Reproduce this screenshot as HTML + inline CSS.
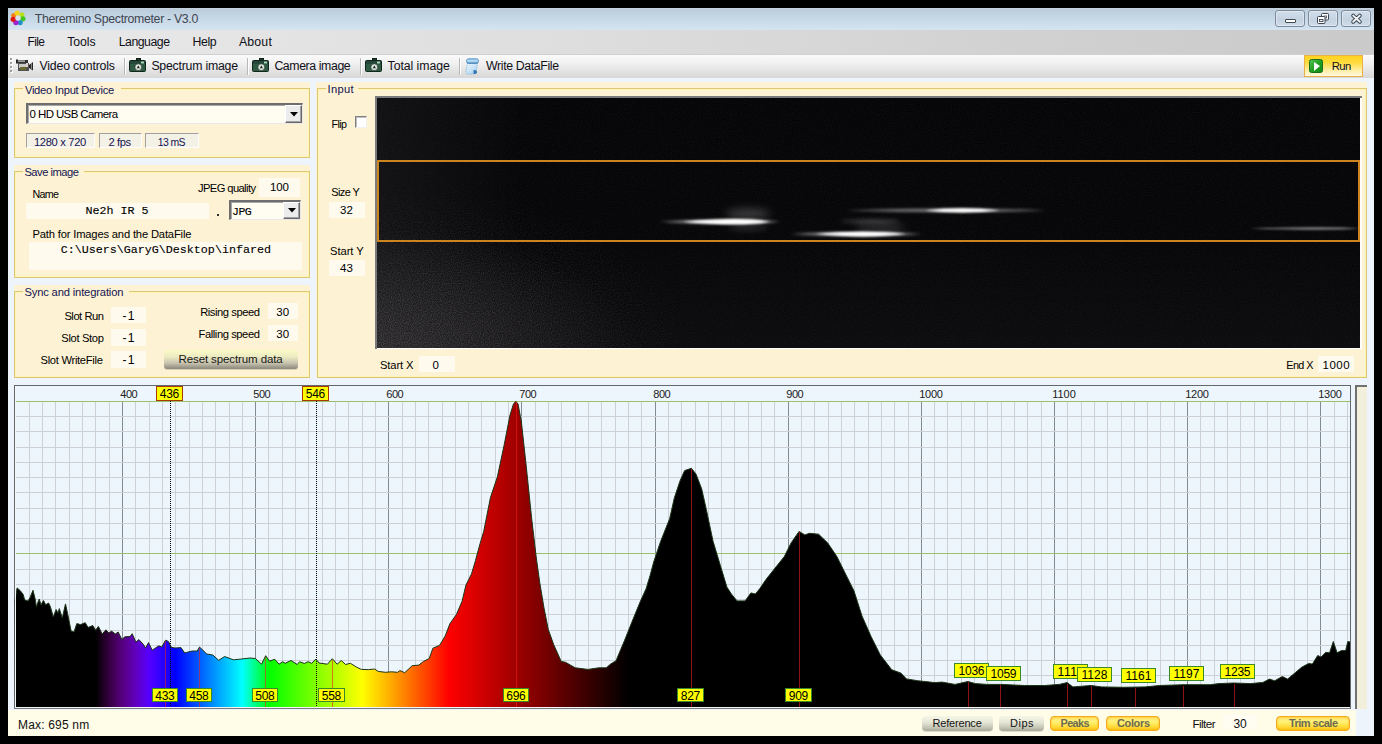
<!DOCTYPE html>
<html><head><meta charset="utf-8"><style>
html,body{margin:0;padding:0;}
body{width:1382px;height:744px;background:#000;position:relative;overflow:hidden;font-family:"Liberation Sans",sans-serif;}
.t{position:absolute;white-space:nowrap;}
div{box-sizing:border-box;}
</style></head><body>
<div style="position:absolute;left:8px;top:8px;width:1366px;height:728px;background:#edf4fb;"></div>
<div style="position:absolute;left:8px;top:8px;width:1366px;height:22px;background:linear-gradient(#c6d3df 0px,#bccddc 2px,#c7d8e7 11px,#d5e4f1 22px);"></div>
<svg style="position:absolute;left:10px;top:10px" width="16" height="16" viewBox="10 10 16 16"><circle cx="13.67" cy="15.50" r="2.6" fill="#f08020"/><circle cx="17.13" cy="13.08" r="2.6" fill="#f8d020"/><circle cx="21.83" cy="14.79" r="2.6" fill="#b8e020"/><circle cx="22.92" cy="18.87" r="2.6" fill="#40c820"/><circle cx="20.11" cy="22.53" r="2.6" fill="#2090c8"/><circle cx="15.89" cy="22.53" r="2.6" fill="#a020d0"/><circle cx="13.17" cy="19.29" r="2.6" fill="#e01818"/><circle cx="18" cy="18" r="2.6" fill="#d8e2ec"/></svg>
<div class="t" style="left:34.80px;top:13px;font:normal 12.30px/12px 'Liberation Sans', sans-serif;letter-spacing:-0.313px;color:#3f4650;">Theremino Spectrometer - V3.0</div>
<div style="position:absolute;left:1275px;top:10px;width:30px;height:17px;border:1px solid #7d8b9b;border-radius:3px;background:linear-gradient(#d2deea,#c6d4e2 50%,#c2d0df 51%,#cfdcea);box-shadow:inset 0 0 0 1px rgba(255,255,255,0.35);"></div>
<div style="position:absolute;left:1308px;top:10px;width:30px;height:17px;border:1px solid #7d8b9b;border-radius:3px;background:linear-gradient(#d2deea,#c6d4e2 50%,#c2d0df 51%,#cfdcea);box-shadow:inset 0 0 0 1px rgba(255,255,255,0.35);"></div>
<div style="position:absolute;left:1341px;top:10px;width:30px;height:17px;border:1px solid #7d8b9b;border-radius:3px;background:linear-gradient(#d2deea,#c6d4e2 50%,#c2d0df 51%,#cfdcea);box-shadow:inset 0 0 0 1px rgba(255,255,255,0.35);"></div>
<div style="position:absolute;left:1285px;top:19px;width:11px;height:4px;background:#fff;border:1px solid #404850;border-radius:1px;"></div>
<svg style="position:absolute;left:1315px;top:12px" width="16" height="14" viewBox="0 0 16 14"><rect x="6.5" y="1.5" width="7" height="6.5" rx="1" fill="#fff" stroke="#3a4450"/><rect x="9" y="4" width="2.5" height="2" fill="none" stroke="#3a4450" stroke-width="0.8"/><rect x="2.5" y="4.5" width="7.5" height="7" rx="1" fill="#fff" stroke="#3a4450"/><rect x="4.5" y="7.5" width="3.5" height="2" fill="none" stroke="#3a4450" stroke-width="0.9"/></svg>
<svg style="position:absolute;left:1349px;top:12px" width="16" height="13" viewBox="0 0 16 13"><path d="M4.2 3.6 L10.8 9.8 M10.8 3.6 L4.2 9.8" stroke="#3a4450" stroke-width="3.9" stroke-linecap="round"/><path d="M4.2 3.6 L10.8 9.8 M10.8 3.6 L4.2 9.8" stroke="#f4f6f8" stroke-width="1.9" stroke-linecap="round"/></svg>
<div style="position:absolute;left:8px;top:30px;width:1366px;height:25px;background:linear-gradient(90deg,#e9e9e9 0%,#dedede 40%,#cfcfcf 80%,#cacaca 100%);border-bottom:1px solid #d0d0d0;"></div>
<div class="t" style="left:27.50px;top:36px;font:normal 11.92px/12px 'Liberation Sans', sans-serif;letter-spacing:-0.600px;color:#101018;">File</div>
<div class="t" style="left:67.30px;top:36px;font:normal 12.30px/12px 'Liberation Sans', sans-serif;letter-spacing:-0.102px;color:#101018;">Tools</div>
<div class="t" style="left:118.70px;top:36px;font:normal 12.30px/12px 'Liberation Sans', sans-serif;letter-spacing:-0.489px;color:#101018;">Language</div>
<div class="t" style="left:192.60px;top:36px;font:normal 12.30px/12px 'Liberation Sans', sans-serif;letter-spacing:-0.467px;color:#101018;">Help</div>
<div class="t" style="left:239.00px;top:36px;font:normal 12.30px/12px 'Liberation Sans', sans-serif;letter-spacing:0.165px;color:#101018;">About</div>
<div style="position:absolute;left:8px;top:55px;width:1366px;height:23px;background:linear-gradient(#fafafa 0px,#f1f1f1 8px,#e3e3e3 16px,#d7d7d7 23px);"></div>
<div style="position:absolute;left:10px;top:58px;width:2px;height:2px;background:#a0a0a0;box-shadow:1px 1px 0 #fff;"></div>
<div style="position:absolute;left:10px;top:62px;width:2px;height:2px;background:#a0a0a0;box-shadow:1px 1px 0 #fff;"></div>
<div style="position:absolute;left:10px;top:66px;width:2px;height:2px;background:#a0a0a0;box-shadow:1px 1px 0 #fff;"></div>
<div style="position:absolute;left:10px;top:70px;width:2px;height:2px;background:#a0a0a0;box-shadow:1px 1px 0 #fff;"></div>
<div style="position:absolute;left:124px;top:58px;width:1px;height:17px;background:#b8b8b8;box-shadow:1px 0 0 #fff;"></div>
<div style="position:absolute;left:247px;top:58px;width:1px;height:17px;background:#b8b8b8;box-shadow:1px 0 0 #fff;"></div>
<div style="position:absolute;left:360px;top:58px;width:1px;height:17px;background:#b8b8b8;box-shadow:1px 0 0 #fff;"></div>
<div style="position:absolute;left:459px;top:58px;width:1px;height:17px;background:#b8b8b8;box-shadow:1px 0 0 #fff;"></div>
<svg style="position:absolute;left:16px;top:59px" width="18" height="13" viewBox="0 0 18 13"><rect x="0" y="0.5" width="2" height="4" fill="#202020"/><rect x="1" y="1" width="11" height="3" fill="#303030"/><rect x="2" y="1.5" width="7" height="1.2" fill="#d0d0d0"/><rect x="2" y="4" width="11" height="8" fill="#505050"/><rect x="3" y="5" width="7" height="4" fill="#c8c8c8"/><rect x="4" y="8" width="6" height="3" fill="#6a6a30"/><rect x="10" y="4" width="2" height="4" fill="#e8d0d0"/><path d="M13 6 L17 3 L17 11.5 L13 9 Z" fill="#282828"/><rect x="15" y="4" width="1" height="6" fill="#888"/></svg>
<svg style="position:absolute;left:129px;top:58px" width="17" height="14" viewBox="0 0 17 14"><rect x="7.5" y="0.5" width="4" height="3" fill="#1e3a28" stroke="#0e2016"/><rect x="0.5" y="2.5" width="16" height="11" rx="1" fill="#2f5a44" stroke="#10261a"/><rect x="1" y="3" width="15" height="3" fill="#24473a"/><rect x="12" y="3.5" width="3" height="2" fill="#a8d8b8"/><circle cx="9.3" cy="9.2" r="3.4" fill="#dce4dc" stroke="#1a2a20" stroke-width="0.6"/><path d="M9.3 7.6 L10.8 10.3 L7.8 10.3Z" fill="#102018"/></svg>
<svg style="position:absolute;left:252px;top:58px" width="17" height="14" viewBox="0 0 17 14"><rect x="7.5" y="0.5" width="4" height="3" fill="#1e3a28" stroke="#0e2016"/><rect x="0.5" y="2.5" width="16" height="11" rx="1" fill="#2f5a44" stroke="#10261a"/><rect x="1" y="3" width="15" height="3" fill="#24473a"/><rect x="12" y="3.5" width="3" height="2" fill="#a8d8b8"/><circle cx="9.3" cy="9.2" r="3.4" fill="#dce4dc" stroke="#1a2a20" stroke-width="0.6"/><path d="M9.3 7.6 L10.8 10.3 L7.8 10.3Z" fill="#102018"/></svg>
<svg style="position:absolute;left:365px;top:58px" width="17" height="14" viewBox="0 0 17 14"><rect x="7.5" y="0.5" width="4" height="3" fill="#1e3a28" stroke="#0e2016"/><rect x="0.5" y="2.5" width="16" height="11" rx="1" fill="#2f5a44" stroke="#10261a"/><rect x="1" y="3" width="15" height="3" fill="#24473a"/><rect x="12" y="3.5" width="3" height="2" fill="#a8d8b8"/><circle cx="9.3" cy="9.2" r="3.4" fill="#dce4dc" stroke="#1a2a20" stroke-width="0.6"/><path d="M9.3 7.6 L10.8 10.3 L7.8 10.3Z" fill="#102018"/></svg>
<svg style="position:absolute;left:465px;top:58px" width="15" height="17" viewBox="0 0 15 17"><defs><linearGradient id="sg" x1="0" y1="0" x2="1" y2="1"><stop offset="0" stop-color="#eef8fe"/><stop offset="1" stop-color="#a6cfee"/></linearGradient><linearGradient id="sr" x1="0" y1="0" x2="0" y2="1"><stop offset="0" stop-color="#8cc8f0"/><stop offset="0.5" stop-color="#bfe4fa"/><stop offset="1" stop-color="#3f86c0"/></linearGradient></defs><path d="M2.5 5 L12.5 5 L11 15 Q10 16 8 16 L1.5 16 L0.8 14 Z" fill="url(#sg)" stroke="#7fb0d6" stroke-width="0.8" stroke-dasharray="1.2 0.8"/><rect x="1.5" y="0.8" width="12" height="4.6" rx="2.2" fill="url(#sr)" stroke="#4a82b4" stroke-width="0.8"/><path d="M8.5 12 Q12.5 11.5 12 14.5 Q11.5 16.5 8.5 16 Z" fill="#3a78b4"/></svg>
<div class="t" style="left:39.40px;top:60px;font:normal 12.30px/12px 'Liberation Sans', sans-serif;letter-spacing:-0.163px;color:#101018;">Video controls</div>
<div class="t" style="left:151.40px;top:60px;font:normal 12.30px/12px 'Liberation Sans', sans-serif;letter-spacing:-0.227px;color:#101018;">Spectrum image</div>
<div class="t" style="left:274.40px;top:60px;font:normal 12.30px/12px 'Liberation Sans', sans-serif;letter-spacing:-0.397px;color:#101018;">Camera image</div>
<div class="t" style="left:387.60px;top:60px;font:normal 12.30px/12px 'Liberation Sans', sans-serif;letter-spacing:-0.070px;color:#101018;">Total image</div>
<div class="t" style="left:486.00px;top:60px;font:normal 12.30px/12px 'Liberation Sans', sans-serif;letter-spacing:-0.361px;color:#101018;">Write DataFile</div>
<div style="position:absolute;left:1304px;top:55px;width:59px;height:22px;border:1px solid #e8b048;background:linear-gradient(#ffd21e 0%,#ffdc40 35%,#ffeea0 70%,#fff8e0 100%);"></div>
<svg style="position:absolute;left:1309px;top:59px" width="14" height="14" viewBox="0 0 14 14"><defs><linearGradient id="rg" x1="0" y1="0" x2="1" y2="1"><stop offset="0" stop-color="#58c458"/><stop offset="0.5" stop-color="#22a022"/><stop offset="1" stop-color="#128a12"/></linearGradient></defs><rect x="0.5" y="0.5" width="13" height="13" rx="2" fill="url(#rg)" stroke="#1a701a"/><path d="M5 3 L11 7 L5 12 Z" fill="#fff"/></svg>
<div class="t" style="left:1331.80px;top:61px;font:normal 11.29px/11px 'Liberation Sans', sans-serif;letter-spacing:-0.600px;color:#101018;">Run</div>
<div style="position:absolute;left:14px;top:82px;width:296px;height:76px;background:#fdf2d3;"></div>
<div style="position:absolute;left:14px;top:88px;width:296px;height:70px;border:1px solid #dfc577;"></div>
<div style="position:absolute;left:15px;top:89px;width:294px;height:68px;border:1px solid #fff7b0;"></div>
<div style="position:absolute;left:23px;top:88px;width:98px;height:2px;background:#fdf2d3;"></div>
<div class="t" style="left:24.90px;top:85px;font:normal 11.20px/11px 'Liberation Sans', sans-serif;letter-spacing:-0.259px;color:#141452;">Video Input Device</div>
<div style="position:absolute;left:26px;top:103px;width:277px;height:21px;background:#fffcf2;border-top:2px solid #6e6e6e;border-left:2px solid #6e6e6e;border-right:1px solid #e8e8e8;border-bottom:1px solid #e8e8e8;box-shadow:inset 1px 1px 0 #a8a8a8;"></div>
<div style="position:absolute;left:285px;top:105px;width:17px;height:18px;background:#ececec;border-top:1px solid #fff;border-left:1px solid #fff;border-right:1px solid #6a6a6a;border-bottom:1px solid #6a6a6a;box-shadow:inset -1px -1px 0 #a0a0a0;"></div>
<svg style="position:absolute;left:289.5px;top:111.5px" width="8" height="5" viewBox="0 0 8 5"><path d="M0 0 H8 L4 4.5Z" fill="#000"/></svg>
<div class="t" style="left:29.60px;top:109px;font:normal 11.48px/11px 'Liberation Sans', sans-serif;letter-spacing:-0.600px;color:#000;">0 HD USB Camera</div>
<div style="position:absolute;left:26px;top:133px;width:69px;height:15px;background:#f4f1e6;border-top:1px solid #a0a0a0;border-left:1px solid #a0a0a0;border-right:1px solid #fff;border-bottom:1px solid #fff;"></div>
<div class="t" style="left:34.00px;top:137px;font:normal 11.20px/11px 'Liberation Sans', sans-serif;letter-spacing:-0.348px;color:#141452;">1280 x 720</div>
<div style="position:absolute;left:99px;top:133px;width:43px;height:15px;background:#f4f1e6;border-top:1px solid #a0a0a0;border-left:1px solid #a0a0a0;border-right:1px solid #fff;border-bottom:1px solid #fff;"></div>
<div class="t" style="left:108.40px;top:137px;font:normal 11.20px/11px 'Liberation Sans', sans-serif;letter-spacing:-0.370px;color:#141452;">2 fps</div>
<div style="position:absolute;left:145px;top:133px;width:54px;height:15px;background:#f4f1e6;border-top:1px solid #a0a0a0;border-left:1px solid #a0a0a0;border-right:1px solid #fff;border-bottom:1px solid #fff;"></div>
<div class="t" style="left:157.70px;top:138px;font:normal 10.45px/10px 'Liberation Sans', sans-serif;letter-spacing:-0.600px;color:#141452;">13 mS</div>
<div style="position:absolute;left:14px;top:165px;width:296px;height:113px;background:#fdf2d3;"></div>
<div style="position:absolute;left:14px;top:171px;width:296px;height:107px;border:1px solid #dfc577;"></div>
<div style="position:absolute;left:15px;top:172px;width:294px;height:105px;border:1px solid #fff7b0;"></div>
<div style="position:absolute;left:23px;top:171px;width:61px;height:2px;background:#fdf2d3;"></div>
<div class="t" style="left:24.40px;top:167px;font:normal 11.20px/11px 'Liberation Sans', sans-serif;letter-spacing:-0.494px;color:#141452;">Save image</div>
<div class="t" style="left:198.00px;top:183px;font:normal 11.18px/11px 'Liberation Sans', sans-serif;letter-spacing:-0.600px;color:#000;">JPEG quality</div>
<div style="position:absolute;left:259px;top:178px;width:41px;height:19px;background:#fefaee;"></div>
<div class="t" style="left:270.00px;top:181px;font:normal 11.50px/12px 'Liberation Sans', sans-serif;letter-spacing:-0.091px;color:#000;">100</div>
<div class="t" style="left:32.40px;top:189px;font:normal 10.68px/11px 'Liberation Sans', sans-serif;letter-spacing:-0.600px;color:#000;">Name</div>
<div style="position:absolute;left:26px;top:203px;width:183px;height:16px;background:#fefaee;"></div>
<div class="t" style="left:85.60px;top:205px;font:normal 11.70px/12px 'Liberation Mono', monospace;letter-spacing:-0.024px;color:#000;-webkit-text-stroke:0.12px #000;">Ne2h IR 5</div>
<div style="position:absolute;left:217px;top:214px;width:2px;height:2px;background:#303030;"></div>
<div style="position:absolute;left:229px;top:200px;width:72px;height:20px;background:#fffcf2;border-top:2px solid #6e6e6e;border-left:2px solid #6e6e6e;border-right:1px solid #e8e8e8;border-bottom:1px solid #e8e8e8;box-shadow:inset 1px 1px 0 #a8a8a8;"></div>
<div style="position:absolute;left:283px;top:202px;width:17px;height:17px;background:#ececec;border-top:1px solid #fff;border-left:1px solid #fff;border-right:1px solid #6a6a6a;border-bottom:1px solid #6a6a6a;box-shadow:inset -1px -1px 0 #a0a0a0;"></div>
<svg style="position:absolute;left:287.5px;top:208.0px" width="8" height="5" viewBox="0 0 8 5"><path d="M0 0 H8 L4 4.5Z" fill="#000"/></svg>
<div class="t" style="left:232.10px;top:206px;font:normal 11.56px/12px 'Liberation Mono', monospace;letter-spacing:-0.600px;color:#000;-webkit-text-stroke:0.12px #000;">JPG</div>
<div class="t" style="left:32.40px;top:229px;font:normal 11.20px/11px 'Liberation Sans', sans-serif;letter-spacing:-0.166px;color:#000;">Path for Images and the DataFile</div>
<div style="position:absolute;left:29px;top:242px;width:273px;height:28px;background:#fefaee;"></div>
<div class="t" style="left:60.70px;top:244px;font:normal 11.70px/12px 'Liberation Mono', monospace;letter-spacing:-0.005px;color:#000;-webkit-text-stroke:0.12px #000;">C:\Users\GaryG\Desktop\infared</div>
<div style="position:absolute;left:14px;top:285px;width:296px;height:93px;background:#fdf2d3;"></div>
<div style="position:absolute;left:14px;top:291px;width:296px;height:87px;border:1px solid #dfc577;"></div>
<div style="position:absolute;left:15px;top:292px;width:294px;height:85px;border:1px solid #fff7b0;"></div>
<div style="position:absolute;left:23px;top:291px;width:106px;height:2px;background:#fdf2d3;"></div>
<div class="t" style="left:24.40px;top:287px;font:normal 11.20px/11px 'Liberation Sans', sans-serif;letter-spacing:-0.153px;color:#141452;">Sync and integration</div>
<div class="t" style="left:64.40px;top:311px;font:normal 11.20px/11px 'Liberation Sans', sans-serif;letter-spacing:-0.479px;color:#000;">Slot Run</div>
<div style="position:absolute;left:111px;top:307px;width:35px;height:16px;background:#fefaee;"></div>
<div class="t" style="left:122.50px;top:310px;font:normal 12.19px/12px 'Liberation Sans', sans-serif;letter-spacing:1.163px;color:#000;">-1</div>
<div class="t" style="left:61.30px;top:333px;font:normal 11.20px/11px 'Liberation Sans', sans-serif;letter-spacing:-0.344px;color:#000;">Slot Stop</div>
<div style="position:absolute;left:111px;top:329px;width:35px;height:17px;background:#fefaee;"></div>
<div class="t" style="left:122.50px;top:332px;font:normal 12.19px/12px 'Liberation Sans', sans-serif;letter-spacing:1.163px;color:#000;">-1</div>
<div class="t" style="left:40.50px;top:355px;font:normal 11.20px/11px 'Liberation Sans', sans-serif;letter-spacing:-0.299px;color:#000;">Slot WriteFile</div>
<div style="position:absolute;left:111px;top:351px;width:35px;height:17px;background:#fefaee;"></div>
<div class="t" style="left:122.50px;top:354px;font:normal 12.19px/12px 'Liberation Sans', sans-serif;letter-spacing:1.163px;color:#000;">-1</div>
<div class="t" style="left:200.20px;top:307px;font:normal 11.20px/11px 'Liberation Sans', sans-serif;letter-spacing:-0.450px;color:#000;">Rising speed</div>
<div style="position:absolute;left:268px;top:303px;width:30px;height:16px;background:#fefaee;"></div>
<div class="t" style="left:276.20px;top:306px;font:normal 11.50px/12px 'Liberation Sans', sans-serif;letter-spacing:0.212px;color:#000;">30</div>
<div class="t" style="left:198.50px;top:329px;font:normal 11.20px/11px 'Liberation Sans', sans-serif;letter-spacing:-0.426px;color:#000;">Falling speed</div>
<div style="position:absolute;left:268px;top:325px;width:30px;height:16px;background:#fefaee;"></div>
<div class="t" style="left:276.20px;top:328px;font:normal 11.50px/12px 'Liberation Sans', sans-serif;letter-spacing:0.212px;color:#000;">30</div>
<div style="position:absolute;left:164px;top:350px;width:134px;height:19px;border-radius:3px;background:linear-gradient(#fafac6 0%,#ecebc2 35%,#c6c2ae 70%,#8a867a 100%);box-shadow:0 1px 0 #d8d0b0;"></div>
<div class="t" style="left:178.50px;top:353px;font:normal 11.50px/12px 'Liberation Sans', sans-serif;letter-spacing:-0.106px;color:#181818;">Reset spectrum data</div>
<div style="position:absolute;left:316px;top:82px;width:1051px;height:296px;background:#fdf2d3;"></div>
<div style="position:absolute;left:317px;top:88px;width:1050px;height:290px;border:1px solid #dfc577;"></div>
<div style="position:absolute;left:318px;top:89px;width:1048px;height:288px;border:1px solid #fff7b0;"></div>
<div style="position:absolute;left:326px;top:88px;width:32px;height:2px;background:#fdf2d3;"></div>
<div class="t" style="left:327.50px;top:84px;font:normal 11.20px/11px 'Liberation Sans', sans-serif;letter-spacing:0.323px;color:#141452;">Input</div>
<div class="t" style="left:331.50px;top:119px;font:normal 10.74px/11px 'Liberation Sans', sans-serif;letter-spacing:-0.600px;color:#000;">Flip</div>
<div style="position:absolute;left:355px;top:116px;width:12px;height:12px;background:#fff;border-top:1px solid #808080;border-left:1px solid #808080;border-right:1px solid #f0f0f0;border-bottom:1px solid #f0f0f0;box-shadow:inset 1px 1px 0 #c0c0c0;"></div>
<div class="t" style="left:331.30px;top:187px;font:normal 10.93px/11px 'Liberation Sans', sans-serif;letter-spacing:-0.600px;color:#000;">Size Y</div>
<div style="position:absolute;left:329px;top:202px;width:36px;height:16px;background:#fefaee;"></div>
<div class="t" style="left:340.00px;top:204px;font:normal 11.50px/12px 'Liberation Sans', sans-serif;letter-spacing:0.212px;color:#000;">32</div>
<div class="t" style="left:330.00px;top:246px;font:normal 11.20px/11px 'Liberation Sans', sans-serif;letter-spacing:-0.039px;color:#000;">Start Y</div>
<div style="position:absolute;left:329px;top:260px;width:36px;height:16px;background:#fefaee;"></div>
<div class="t" style="left:340.00px;top:262px;font:normal 11.50px/12px 'Liberation Sans', sans-serif;letter-spacing:0.212px;color:#000;">43</div>
<div class="t" style="left:380.00px;top:360px;font:normal 11.20px/11px 'Liberation Sans', sans-serif;letter-spacing:-0.106px;color:#000;">Start X</div>
<div style="position:absolute;left:419px;top:356px;width:36px;height:16px;background:#fefaee;"></div>
<div class="t" style="left:432.50px;top:359px;font:normal 11.51px/12px 'Liberation Sans', sans-serif;letter-spacing:0.600px;color:#000;">0</div>
<div class="t" style="left:1286.30px;top:360px;font:normal 10.83px/11px 'Liberation Sans', sans-serif;letter-spacing:-0.600px;color:#000;">End X</div>
<div style="position:absolute;left:1318px;top:356px;width:36px;height:16px;background:#fefaee;"></div>
<div class="t" style="left:1322.50px;top:359px;font:normal 11.50px/12px 'Liberation Sans', sans-serif;letter-spacing:0.504px;color:#000;">1000</div>
<div style="position:absolute;left:375px;top:96px;width:987px;height:253px;background:#fff;border-top:2px solid #7a7a7a;border-left:2px solid #7a7a7a;"></div>
<svg style="position:absolute;left:377px;top:98px" width="983" height="250" viewBox="0 0 983 250"><defs><filter id="nz" x="0" y="0" width="100%" height="100%"><feTurbulence type="fractalNoise" baseFrequency="0.9" numOctaves="1" seed="3"/><feColorMatrix type="matrix" values="0 0 0 0 0.15  0 0 0 0 0.15  0 0 0 0 0.15  0 0 0 2.2 -0.85"/></filter><filter id="b1" x="-50%" y="-300%" width="200%" height="700%"><feGaussianBlur stdDeviation="14 1.6"/></filter><filter id="b2" x="-50%" y="-300%" width="200%" height="700%"><feGaussianBlur stdDeviation="8 1"/></filter><filter id="b3" x="-50%" y="-300%" width="200%" height="700%"><feGaussianBlur stdDeviation="10 4"/></filter><linearGradient id="vg" x1="0" y1="0" x2="0" y2="1"><stop offset="0" stop-color="#050407"/><stop offset="0.55" stop-color="#060508"/><stop offset="1" stop-color="#0c0b0e"/></linearGradient><linearGradient id="hg" x1="0" y1="0" x2="1" y2="0"><stop offset="0" stop-color="#fff" stop-opacity="0.05"/><stop offset="0.15" stop-color="#fff" stop-opacity="0"/></linearGradient><radialGradient id="bl" gradientUnits="userSpaceOnUse" cx="0" cy="250" r="260" gradientTransform="translate(0 250) scale(1 0.45) translate(0 -250)"><stop offset="0" stop-color="#2a282a" stop-opacity="0.9"/><stop offset="1" stop-color="#2a282a" stop-opacity="0"/></radialGradient><mask id="nm" maskUnits="userSpaceOnUse" x="0" y="0" width="983" height="250"><rect width="983" height="250" fill="url(#mg)"/></mask><radialGradient id="mg" gradientUnits="userSpaceOnUse" cx="0" cy="250" r="330" gradientTransform="translate(0 250) scale(1 0.5) translate(0 -250)"><stop offset="0" stop-color="#fff"/><stop offset="1" stop-color="#000"/></radialGradient></defs><rect width="983" height="250" fill="url(#vg)"/><rect width="983" height="250" fill="url(#hg)"/><rect width="983" height="250" fill="url(#bl)"/><rect width="983" height="250" filter="url(#nz)" opacity="0.1"/><rect width="983" height="250" filter="url(#nz)" opacity="0.5" mask="url(#nm)"/><ellipse cx="371" cy="116" rx="22" ry="5" fill="#fff" opacity="0.22" style="filter:blur(4px)"/><ellipse cx="371" cy="129" rx="20" ry="3" fill="#fff" opacity="0.15" style="filter:blur(3px)"/><path d="M283 123.69999999999999 Q358 119.19999999999999 403 123.69999999999999 Q358 128.2 283 123.69999999999999Z" fill="#fff" opacity="0.55" style="filter:blur(1.6px)"/><path d="M306 123.69999999999999 Q365 118.49999999999999 393 123.69999999999999 Q365 128.89999999999998 306 123.69999999999999Z" fill="#fff" opacity="1.0" style="filter:blur(0.9px)"/><path d="M468 112.4 Q573 108.80000000000001 669 112.4 Q573 116.0 468 112.4Z" fill="#fff" opacity="0.45" style="filter:blur(1.6px)"/><path d="M548 112.4 Q585 108.2 623 112.4 Q585 116.60000000000001 548 112.4Z" fill="#fff" opacity="1.0" style="filter:blur(0.9px)"/><ellipse cx="493" cy="123.30000000000001" rx="30" ry="1.5" fill="#fff" opacity="0.25" style="filter:blur(2px)"/><ellipse cx="503" cy="130" rx="25" ry="5" fill="#fff" opacity="0.15" style="filter:blur(4px)"/><path d="M413 136.1 Q485 131.9 545 136.1 Q485 140.29999999999998 413 136.1Z" fill="#fff" opacity="0.55" style="filter:blur(1.6px)"/><path d="M438 136.1 Q489 131.5 529 136.1 Q489 140.7 438 136.1Z" fill="#fff" opacity="1.0" style="filter:blur(0.9px)"/><path d="M873 130.5 Q953 128.1 983 130.5 Q953 132.9 873 130.5Z" fill="#fff" opacity="0.5" style="filter:blur(1.2px)"/></svg>
<div style="position:absolute;left:377px;top:160px;width:983px;height:82px;border:2px solid #cc8420;"></div>
<svg style="position:absolute;left:0;top:0" width="1382" height="744" viewBox="0 0 1382 744" shape-rendering="crispEdges"><defs><linearGradient id="spec" gradientUnits="userSpaceOnUse" x1="15" y1="0" x2="1350" y2="0"><stop offset="0.05061" stop-color="rgb(0,0,0)"/><stop offset="0.05559" stop-color="rgb(0,0,0)"/><stop offset="0.06058" stop-color="rgb(0,0,0)"/><stop offset="0.06556" stop-color="rgb(29,0,32)"/><stop offset="0.07055" stop-color="rgb(53,0,64)"/><stop offset="0.07554" stop-color="rgb(72,0,96)"/><stop offset="0.08052" stop-color="rgb(85,0,128)"/><stop offset="0.08551" stop-color="rgb(93,0,159)"/><stop offset="0.09050" stop-color="rgb(96,0,191)"/><stop offset="0.09548" stop-color="rgb(93,0,223)"/><stop offset="0.10047" stop-color="rgb(85,0,255)"/><stop offset="0.10546" stop-color="rgb(64,0,255)"/><stop offset="0.11044" stop-color="rgb(42,0,255)"/><stop offset="0.11543" stop-color="rgb(21,0,255)"/><stop offset="0.12042" stop-color="rgb(0,0,255)"/><stop offset="0.12540" stop-color="rgb(0,26,255)"/><stop offset="0.13039" stop-color="rgb(0,51,255)"/><stop offset="0.13538" stop-color="rgb(0,76,255)"/><stop offset="0.14036" stop-color="rgb(0,102,255)"/><stop offset="0.14535" stop-color="rgb(0,128,255)"/><stop offset="0.15034" stop-color="rgb(0,153,255)"/><stop offset="0.15532" stop-color="rgb(0,178,255)"/><stop offset="0.16031" stop-color="rgb(0,204,255)"/><stop offset="0.16530" stop-color="rgb(0,230,255)"/><stop offset="0.17028" stop-color="rgb(0,255,255)"/><stop offset="0.17527" stop-color="rgb(0,255,191)"/><stop offset="0.18025" stop-color="rgb(0,255,128)"/><stop offset="0.18524" stop-color="rgb(0,255,64)"/><stop offset="0.19023" stop-color="rgb(0,255,0)"/><stop offset="0.19521" stop-color="rgb(18,255,0)"/><stop offset="0.20020" stop-color="rgb(36,255,0)"/><stop offset="0.20519" stop-color="rgb(55,255,0)"/><stop offset="0.21017" stop-color="rgb(73,255,0)"/><stop offset="0.21516" stop-color="rgb(91,255,0)"/><stop offset="0.22015" stop-color="rgb(109,255,0)"/><stop offset="0.22513" stop-color="rgb(128,255,0)"/><stop offset="0.23012" stop-color="rgb(146,255,0)"/><stop offset="0.23511" stop-color="rgb(164,255,0)"/><stop offset="0.24009" stop-color="rgb(182,255,0)"/><stop offset="0.24508" stop-color="rgb(200,255,0)"/><stop offset="0.25007" stop-color="rgb(219,255,0)"/><stop offset="0.25505" stop-color="rgb(237,255,0)"/><stop offset="0.26004" stop-color="rgb(255,255,0)"/><stop offset="0.26503" stop-color="rgb(255,235,0)"/><stop offset="0.27001" stop-color="rgb(255,216,0)"/><stop offset="0.27500" stop-color="rgb(255,196,0)"/><stop offset="0.27999" stop-color="rgb(255,177,0)"/><stop offset="0.28497" stop-color="rgb(255,157,0)"/><stop offset="0.28996" stop-color="rgb(255,137,0)"/><stop offset="0.29494" stop-color="rgb(255,118,0)"/><stop offset="0.29993" stop-color="rgb(255,98,0)"/><stop offset="0.30492" stop-color="rgb(255,78,0)"/><stop offset="0.30990" stop-color="rgb(255,59,0)"/><stop offset="0.31489" stop-color="rgb(255,39,0)"/><stop offset="0.31988" stop-color="rgb(255,20,0)"/><stop offset="0.32486" stop-color="rgb(255,0,0)"/><stop offset="0.32985" stop-color="rgb(246,0,0)"/><stop offset="0.33484" stop-color="rgb(236,0,0)"/><stop offset="0.33982" stop-color="rgb(227,0,0)"/><stop offset="0.34481" stop-color="rgb(217,0,0)"/><stop offset="0.34980" stop-color="rgb(208,0,0)"/><stop offset="0.35478" stop-color="rgb(198,0,0)"/><stop offset="0.35977" stop-color="rgb(189,0,0)"/><stop offset="0.36476" stop-color="rgb(179,0,0)"/><stop offset="0.36974" stop-color="rgb(170,0,0)"/><stop offset="0.37473" stop-color="rgb(161,0,0)"/><stop offset="0.37972" stop-color="rgb(151,0,0)"/><stop offset="0.38470" stop-color="rgb(142,0,0)"/><stop offset="0.38969" stop-color="rgb(132,0,0)"/><stop offset="0.39467" stop-color="rgb(123,0,0)"/><stop offset="0.39966" stop-color="rgb(113,0,0)"/><stop offset="0.40465" stop-color="rgb(104,0,0)"/><stop offset="0.40963" stop-color="rgb(94,0,0)"/><stop offset="0.41462" stop-color="rgb(85,0,0)"/><stop offset="0.41961" stop-color="rgb(76,0,0)"/><stop offset="0.42459" stop-color="rgb(66,0,0)"/><stop offset="0.42958" stop-color="rgb(57,0,0)"/><stop offset="0.43457" stop-color="rgb(47,0,0)"/><stop offset="0.43955" stop-color="rgb(38,0,0)"/><stop offset="0.44454" stop-color="rgb(28,0,0)"/><stop offset="0.44953" stop-color="rgb(19,0,0)"/><stop offset="0.45451" stop-color="rgb(9,0,0)"/><stop offset="0.45950" stop-color="rgb(0,0,0)"/><stop offset="0.46449" stop-color="rgb(0,0,0)"/><stop offset="0.46947" stop-color="rgb(0,0,0)"/></linearGradient></defs><rect x="14.5" y="385.5" width="1336" height="322" fill="#eef6fd" stroke="#62686e" stroke-width="1"/><line x1="15.5" y1="401" x2="15.5" y2="707" stroke="#cdd1d6"/><line x1="29.5" y1="401" x2="29.5" y2="707" stroke="#cdd1d6"/><line x1="42.5" y1="401" x2="42.5" y2="707" stroke="#cdd1d6"/><line x1="55.5" y1="401" x2="55.5" y2="707" stroke="#cdd1d6"/><line x1="69.5" y1="401" x2="69.5" y2="707" stroke="#cdd1d6"/><line x1="82.5" y1="401" x2="82.5" y2="707" stroke="#cdd1d6"/><line x1="95.5" y1="401" x2="95.5" y2="707" stroke="#cdd1d6"/><line x1="109.5" y1="401" x2="109.5" y2="707" stroke="#cdd1d6"/><line x1="122.5" y1="401" x2="122.5" y2="707" stroke="#858b93"/><line x1="135.5" y1="401" x2="135.5" y2="707" stroke="#cdd1d6"/><line x1="149.5" y1="401" x2="149.5" y2="707" stroke="#cdd1d6"/><line x1="162.5" y1="401" x2="162.5" y2="707" stroke="#cdd1d6"/><line x1="175.5" y1="401" x2="175.5" y2="707" stroke="#cdd1d6"/><line x1="189.5" y1="401" x2="189.5" y2="707" stroke="#cdd1d6"/><line x1="202.5" y1="401" x2="202.5" y2="707" stroke="#cdd1d6"/><line x1="215.5" y1="401" x2="215.5" y2="707" stroke="#cdd1d6"/><line x1="229.5" y1="401" x2="229.5" y2="707" stroke="#cdd1d6"/><line x1="242.5" y1="401" x2="242.5" y2="707" stroke="#cdd1d6"/><line x1="255.5" y1="401" x2="255.5" y2="707" stroke="#858b93"/><line x1="268.5" y1="401" x2="268.5" y2="707" stroke="#cdd1d6"/><line x1="282.5" y1="401" x2="282.5" y2="707" stroke="#cdd1d6"/><line x1="295.5" y1="401" x2="295.5" y2="707" stroke="#cdd1d6"/><line x1="308.5" y1="401" x2="308.5" y2="707" stroke="#cdd1d6"/><line x1="322.5" y1="401" x2="322.5" y2="707" stroke="#cdd1d6"/><line x1="335.5" y1="401" x2="335.5" y2="707" stroke="#cdd1d6"/><line x1="348.5" y1="401" x2="348.5" y2="707" stroke="#cdd1d6"/><line x1="362.5" y1="401" x2="362.5" y2="707" stroke="#cdd1d6"/><line x1="375.5" y1="401" x2="375.5" y2="707" stroke="#cdd1d6"/><line x1="388.5" y1="401" x2="388.5" y2="707" stroke="#858b93"/><line x1="402.5" y1="401" x2="402.5" y2="707" stroke="#cdd1d6"/><line x1="415.5" y1="401" x2="415.5" y2="707" stroke="#cdd1d6"/><line x1="428.5" y1="401" x2="428.5" y2="707" stroke="#cdd1d6"/><line x1="442.5" y1="401" x2="442.5" y2="707" stroke="#cdd1d6"/><line x1="455.5" y1="401" x2="455.5" y2="707" stroke="#cdd1d6"/><line x1="468.5" y1="401" x2="468.5" y2="707" stroke="#cdd1d6"/><line x1="481.5" y1="401" x2="481.5" y2="707" stroke="#cdd1d6"/><line x1="495.5" y1="401" x2="495.5" y2="707" stroke="#cdd1d6"/><line x1="508.5" y1="401" x2="508.5" y2="707" stroke="#cdd1d6"/><line x1="521.5" y1="401" x2="521.5" y2="707" stroke="#858b93"/><line x1="535.5" y1="401" x2="535.5" y2="707" stroke="#cdd1d6"/><line x1="548.5" y1="401" x2="548.5" y2="707" stroke="#cdd1d6"/><line x1="561.5" y1="401" x2="561.5" y2="707" stroke="#cdd1d6"/><line x1="575.5" y1="401" x2="575.5" y2="707" stroke="#cdd1d6"/><line x1="588.5" y1="401" x2="588.5" y2="707" stroke="#cdd1d6"/><line x1="601.5" y1="401" x2="601.5" y2="707" stroke="#cdd1d6"/><line x1="615.5" y1="401" x2="615.5" y2="707" stroke="#cdd1d6"/><line x1="628.5" y1="401" x2="628.5" y2="707" stroke="#cdd1d6"/><line x1="641.5" y1="401" x2="641.5" y2="707" stroke="#cdd1d6"/><line x1="655.5" y1="401" x2="655.5" y2="707" stroke="#858b93"/><line x1="668.5" y1="401" x2="668.5" y2="707" stroke="#cdd1d6"/><line x1="681.5" y1="401" x2="681.5" y2="707" stroke="#cdd1d6"/><line x1="695.5" y1="401" x2="695.5" y2="707" stroke="#cdd1d6"/><line x1="708.5" y1="401" x2="708.5" y2="707" stroke="#cdd1d6"/><line x1="721.5" y1="401" x2="721.5" y2="707" stroke="#cdd1d6"/><line x1="734.5" y1="401" x2="734.5" y2="707" stroke="#cdd1d6"/><line x1="748.5" y1="401" x2="748.5" y2="707" stroke="#cdd1d6"/><line x1="761.5" y1="401" x2="761.5" y2="707" stroke="#cdd1d6"/><line x1="774.5" y1="401" x2="774.5" y2="707" stroke="#cdd1d6"/><line x1="788.5" y1="401" x2="788.5" y2="707" stroke="#858b93"/><line x1="801.5" y1="401" x2="801.5" y2="707" stroke="#cdd1d6"/><line x1="814.5" y1="401" x2="814.5" y2="707" stroke="#cdd1d6"/><line x1="828.5" y1="401" x2="828.5" y2="707" stroke="#cdd1d6"/><line x1="841.5" y1="401" x2="841.5" y2="707" stroke="#cdd1d6"/><line x1="854.5" y1="401" x2="854.5" y2="707" stroke="#cdd1d6"/><line x1="868.5" y1="401" x2="868.5" y2="707" stroke="#cdd1d6"/><line x1="881.5" y1="401" x2="881.5" y2="707" stroke="#cdd1d6"/><line x1="894.5" y1="401" x2="894.5" y2="707" stroke="#cdd1d6"/><line x1="908.5" y1="401" x2="908.5" y2="707" stroke="#cdd1d6"/><line x1="921.5" y1="401" x2="921.5" y2="707" stroke="#858b93"/><line x1="934.5" y1="401" x2="934.5" y2="707" stroke="#cdd1d6"/><line x1="947.5" y1="401" x2="947.5" y2="707" stroke="#cdd1d6"/><line x1="961.5" y1="401" x2="961.5" y2="707" stroke="#cdd1d6"/><line x1="974.5" y1="401" x2="974.5" y2="707" stroke="#cdd1d6"/><line x1="987.5" y1="401" x2="987.5" y2="707" stroke="#cdd1d6"/><line x1="1001.5" y1="401" x2="1001.5" y2="707" stroke="#cdd1d6"/><line x1="1014.5" y1="401" x2="1014.5" y2="707" stroke="#cdd1d6"/><line x1="1027.5" y1="401" x2="1027.5" y2="707" stroke="#cdd1d6"/><line x1="1041.5" y1="401" x2="1041.5" y2="707" stroke="#cdd1d6"/><line x1="1054.5" y1="401" x2="1054.5" y2="707" stroke="#858b93"/><line x1="1067.5" y1="401" x2="1067.5" y2="707" stroke="#cdd1d6"/><line x1="1081.5" y1="401" x2="1081.5" y2="707" stroke="#cdd1d6"/><line x1="1094.5" y1="401" x2="1094.5" y2="707" stroke="#cdd1d6"/><line x1="1107.5" y1="401" x2="1107.5" y2="707" stroke="#cdd1d6"/><line x1="1121.5" y1="401" x2="1121.5" y2="707" stroke="#cdd1d6"/><line x1="1134.5" y1="401" x2="1134.5" y2="707" stroke="#cdd1d6"/><line x1="1147.5" y1="401" x2="1147.5" y2="707" stroke="#cdd1d6"/><line x1="1160.5" y1="401" x2="1160.5" y2="707" stroke="#cdd1d6"/><line x1="1174.5" y1="401" x2="1174.5" y2="707" stroke="#cdd1d6"/><line x1="1187.5" y1="401" x2="1187.5" y2="707" stroke="#858b93"/><line x1="1200.5" y1="401" x2="1200.5" y2="707" stroke="#cdd1d6"/><line x1="1214.5" y1="401" x2="1214.5" y2="707" stroke="#cdd1d6"/><line x1="1227.5" y1="401" x2="1227.5" y2="707" stroke="#cdd1d6"/><line x1="1240.5" y1="401" x2="1240.5" y2="707" stroke="#cdd1d6"/><line x1="1254.5" y1="401" x2="1254.5" y2="707" stroke="#cdd1d6"/><line x1="1267.5" y1="401" x2="1267.5" y2="707" stroke="#cdd1d6"/><line x1="1280.5" y1="401" x2="1280.5" y2="707" stroke="#cdd1d6"/><line x1="1294.5" y1="401" x2="1294.5" y2="707" stroke="#cdd1d6"/><line x1="1307.5" y1="401" x2="1307.5" y2="707" stroke="#cdd1d6"/><line x1="1320.5" y1="401" x2="1320.5" y2="707" stroke="#858b93"/><line x1="1334.5" y1="401" x2="1334.5" y2="707" stroke="#cdd1d6"/><line x1="1347.5" y1="401" x2="1347.5" y2="707" stroke="#cdd1d6"/><line x1="15" y1="401.5" x2="1350" y2="401.5" stroke="#9ebf6a"/><line x1="15" y1="416.5" x2="1350" y2="416.5" stroke="#cdd1d6"/><line x1="15" y1="431.5" x2="1350" y2="431.5" stroke="#cdd1d6"/><line x1="15" y1="447.5" x2="1350" y2="447.5" stroke="#cdd1d6"/><line x1="15" y1="462.5" x2="1350" y2="462.5" stroke="#cdd1d6"/><line x1="15" y1="477.5" x2="1350" y2="477.5" stroke="#cdd1d6"/><line x1="15" y1="492.5" x2="1350" y2="492.5" stroke="#cdd1d6"/><line x1="15" y1="508.5" x2="1350" y2="508.5" stroke="#cdd1d6"/><line x1="15" y1="523.5" x2="1350" y2="523.5" stroke="#cdd1d6"/><line x1="15" y1="538.5" x2="1350" y2="538.5" stroke="#cdd1d6"/><line x1="15" y1="553.5" x2="1350" y2="553.5" stroke="#9ebf6a"/><line x1="15" y1="569.5" x2="1350" y2="569.5" stroke="#cdd1d6"/><line x1="15" y1="584.5" x2="1350" y2="584.5" stroke="#cdd1d6"/><line x1="15" y1="599.5" x2="1350" y2="599.5" stroke="#cdd1d6"/><line x1="15" y1="614.5" x2="1350" y2="614.5" stroke="#cdd1d6"/><line x1="15" y1="630.5" x2="1350" y2="630.5" stroke="#cdd1d6"/><line x1="15" y1="645.5" x2="1350" y2="645.5" stroke="#cdd1d6"/><line x1="15" y1="660.5" x2="1350" y2="660.5" stroke="#cdd1d6"/><line x1="15" y1="675.5" x2="1350" y2="675.5" stroke="#cdd1d6"/><line x1="15" y1="691.5" x2="1350" y2="691.5" stroke="#cdd1d6"/><path d="M15 707 L14.7 602.0 L17.1 587.9 L20.3 590.7 L23.2 594.5 L24.7 600.0 L27.9 601.0 L29.8 598.0 L33.0 590.3 L35.4 600.0 L36.3 606.7 L39.2 599.0 L41.0 604.8 L43.5 600.5 L45.7 604.8 L48.6 603.0 L50.4 606.7 L53.3 617.0 L56.1 609.5 L58.0 613.0 L59.3 608.6 L62.3 618.0 L65.5 603.9 L68.3 617.0 L71.1 631.0 L74.0 632.0 L76.8 623.6 L80.5 624.6 L85.2 622.7 L88.1 627.4 L92.8 625.5 L95.6 630.2 L98.4 626.4 L102.2 634.0 L105.9 629.8 L108.8 633.0 L111.6 631.1 L115.3 634.0 L118.2 632.0 L121.9 639.6 L124.7 636.8 L130.0 636.5 L132.2 633.7 L135.9 642.1 L138.9 639.6 L143.3 644.3 L145.5 648.0 L148.5 642.6 L152.2 650.2 L158.8 645.8 L161.8 647.0 L165.5 640.2 L168.4 641.4 L171.4 647.3 L175.1 648.0 L181.0 647.6 L184.7 652.9 L192.1 651.0 L197.2 651.0 L199.5 647.0 L206.8 654.0 L212.8 655.0 L218.7 660.3 L224.6 656.5 L233.4 659.8 L240.8 659.1 L250.0 658.0 L255.4 658.5 L261.5 664.2 L265.7 655.7 L269.4 661.1 L274.8 659.3 L279.0 664.2 L282.7 661.7 L285.1 663.3 L291.1 660.5 L297.2 664.5 L299.6 661.7 L304.4 663.5 L308.0 661.7 L311.7 663.3 L315.9 659.0 L319.0 663.0 L327.4 664.2 L332.3 658.7 L337.1 664.2 L341.3 660.5 L345.6 664.5 L350.4 663.3 L356.4 667.0 L361.3 669.4 L368.5 669.6 L374.6 669.0 L378.2 671.4 L385.5 672.3 L391.5 671.8 L397.6 672.3 L400.0 670.6 L404.7 672.7 L412.2 665.7 L418.8 665.1 L423.5 661.4 L429.2 658.6 L432.9 648.2 L439.5 645.4 L445.2 636.0 L449.9 623.7 L456.5 614.3 L462.1 601.2 L465.9 585.2 L471.5 573.9 L475.5 560.5 L480.0 543.8 L483.7 531.5 L490.5 497.3 L497.4 476.8 L504.2 444.8 L510.0 415.1 L513.4 404.2 L515.7 401.4 L518.0 403.7 L521.4 422.0 L525.9 463.0 L531.6 517.9 L536.2 557.0 L539.7 582.3 L544.0 608.0 L548.3 629.6 L553.7 644.6 L561.2 661.4 L565.5 662.3 L575.2 667.8 L588.0 669.4 L598.8 667.8 L606.3 667.8 L610.6 664.0 L616.0 660.8 L624.6 640.3 L633.2 618.8 L640.5 601.0 L646.1 588.7 L650.0 575.8 L653.7 562.0 L660.6 541.4 L669.7 518.6 L674.3 498.0 L680.0 480.9 L684.6 470.6 L691.4 468.3 L696.0 474.0 L701.7 488.9 L706.3 509.4 L713.1 541.4 L720.0 564.3 L726.9 587.1 L731.4 594.0 L737.1 600.9 L745.1 600.9 L750.9 592.9 L755.4 594.0 L760.0 588.3 L766.0 579.4 L775.1 568.0 L784.3 556.6 L791.1 542.9 L799.1 531.4 L804.9 534.9 L809.4 533.3 L818.6 534.2 L827.7 542.9 L836.9 556.6 L846.0 574.9 L854.0 590.9 L862.0 616.0 L871.1 636.6 L880.3 654.9 L891.7 669.7 L900.9 673.1 L906.5 678.9 L917.4 680.7 L934.7 682.6 L942.0 682.1 L955.0 684.4 L968.0 681.5 L975.3 683.6 L986.8 684.4 L1001.3 684.4 L1024.5 685.5 L1044.7 685.5 L1059.2 684.4 L1067.1 682.6 L1072.9 686.9 L1091.0 685.5 L1101.7 686.9 L1123.4 687.3 L1145.1 686.9 L1159.6 685.5 L1184.2 684.7 L1210.2 684.7 L1218.9 683.6 L1233.4 683.0 L1250.8 683.6 L1262.9 682.4 L1269.4 679.1 L1274.7 680.8 L1282.3 676.5 L1287.6 679.1 L1295.2 672.7 L1301.6 667.3 L1308.6 663.5 L1312.4 664.1 L1317.7 655.5 L1321.0 657.1 L1325.8 652.3 L1329.6 652.8 L1333.3 641.5 L1337.1 652.8 L1341.4 650.6 L1345.7 650.6 L1347.8 641.5 L1350.0 642.0 L1350 707 Z" fill="url(#spec)" shape-rendering="geometricPrecision"/><polyline points="14.7,602.0 17.1,587.9 20.3,590.7 23.2,594.5 24.7,600.0 27.9,601.0 29.8,598.0 33.0,590.3 35.4,600.0 36.3,606.7 39.2,599.0 41.0,604.8 43.5,600.5 45.7,604.8 48.6,603.0 50.4,606.7 53.3,617.0 56.1,609.5 58.0,613.0 59.3,608.6 62.3,618.0 65.5,603.9 68.3,617.0 71.1,631.0 74.0,632.0 76.8,623.6 80.5,624.6 85.2,622.7 88.1,627.4 92.8,625.5 95.6,630.2 98.4,626.4 102.2,634.0 105.9,629.8 108.8,633.0 111.6,631.1 115.3,634.0 118.2,632.0 121.9,639.6 124.7,636.8 130.0,636.5 132.2,633.7 135.9,642.1 138.9,639.6 143.3,644.3 145.5,648.0 148.5,642.6 152.2,650.2 158.8,645.8 161.8,647.0 165.5,640.2 168.4,641.4 171.4,647.3 175.1,648.0 181.0,647.6 184.7,652.9 192.1,651.0 197.2,651.0 199.5,647.0 206.8,654.0 212.8,655.0 218.7,660.3 224.6,656.5 233.4,659.8 240.8,659.1 250.0,658.0 255.4,658.5 261.5,664.2 265.7,655.7 269.4,661.1 274.8,659.3 279.0,664.2 282.7,661.7 285.1,663.3 291.1,660.5 297.2,664.5 299.6,661.7 304.4,663.5 308.0,661.7 311.7,663.3 315.9,659.0 319.0,663.0 327.4,664.2 332.3,658.7 337.1,664.2 341.3,660.5 345.6,664.5 350.4,663.3 356.4,667.0 361.3,669.4 368.5,669.6 374.6,669.0 378.2,671.4 385.5,672.3 391.5,671.8 397.6,672.3 400.0,670.6 404.7,672.7 412.2,665.7 418.8,665.1 423.5,661.4 429.2,658.6 432.9,648.2 439.5,645.4 445.2,636.0 449.9,623.7 456.5,614.3 462.1,601.2 465.9,585.2 471.5,573.9 475.5,560.5 480.0,543.8 483.7,531.5 490.5,497.3 497.4,476.8 504.2,444.8 510.0,415.1 513.4,404.2 515.7,401.4 518.0,403.7 521.4,422.0 525.9,463.0 531.6,517.9 536.2,557.0 539.7,582.3 544.0,608.0 548.3,629.6 553.7,644.6 561.2,661.4 565.5,662.3 575.2,667.8 588.0,669.4 598.8,667.8 606.3,667.8 610.6,664.0 616.0,660.8 624.6,640.3 633.2,618.8 640.5,601.0 646.1,588.7 650.0,575.8 653.7,562.0 660.6,541.4 669.7,518.6 674.3,498.0 680.0,480.9 684.6,470.6 691.4,468.3 696.0,474.0 701.7,488.9 706.3,509.4 713.1,541.4 720.0,564.3 726.9,587.1 731.4,594.0 737.1,600.9 745.1,600.9 750.9,592.9 755.4,594.0 760.0,588.3 766.0,579.4 775.1,568.0 784.3,556.6 791.1,542.9 799.1,531.4 804.9,534.9 809.4,533.3 818.6,534.2 827.7,542.9 836.9,556.6 846.0,574.9 854.0,590.9 862.0,616.0 871.1,636.6 880.3,654.9 891.7,669.7 900.9,673.1 906.5,678.9 917.4,680.7 934.7,682.6 942.0,682.1 955.0,684.4 968.0,681.5 975.3,683.6 986.8,684.4 1001.3,684.4 1024.5,685.5 1044.7,685.5 1059.2,684.4 1067.1,682.6 1072.9,686.9 1091.0,685.5 1101.7,686.9 1123.4,687.3 1145.1,686.9 1159.6,685.5 1184.2,684.7 1210.2,684.7 1218.9,683.6 1233.4,683.0 1250.8,683.6 1262.9,682.4 1269.4,679.1 1274.7,680.8 1282.3,676.5 1287.6,679.1 1295.2,672.7 1301.6,667.3 1308.6,663.5 1312.4,664.1 1317.7,655.5 1321.0,657.1 1325.8,652.3 1329.6,652.8 1333.3,641.5 1337.1,652.8 1341.4,650.6 1345.7,650.6 1347.8,641.5 1350.0,642.0" fill="none" stroke="#1c3418" stroke-width="1" shape-rendering="geometricPrecision"/><line x1="15" y1="707.5" x2="1350" y2="707.5" stroke="#f4f4f4"/><line x1="14" y1="708.5" x2="1351" y2="708.5" stroke="#7a7a7a"/><line x1="15.5" y1="386" x2="15.5" y2="708" stroke="#f6f8fa"/><line x1="170.5" y1="401" x2="170.5" y2="707" stroke="#000" stroke-dasharray="1 1"/><line x1="316.5" y1="401" x2="316.5" y2="707" stroke="#000" stroke-dasharray="1 1"/><line x1="165.5" y1="641" x2="165.5" y2="707" stroke="rgb(240,30,30)" stroke-opacity="0.6"/><line x1="199.5" y1="648" x2="199.5" y2="707" stroke="rgb(240,30,30)" stroke-opacity="0.6"/><line x1="265.5" y1="657" x2="265.5" y2="707" stroke="rgb(240,30,30)" stroke-opacity="0.6"/><line x1="332.5" y1="660" x2="332.5" y2="707" stroke="rgb(240,30,30)" stroke-opacity="0.6"/><line x1="516.5" y1="402" x2="516.5" y2="707" stroke="rgb(240,30,30)" stroke-opacity="0.6"/><line x1="691.5" y1="469" x2="691.5" y2="707" stroke="rgb(240,30,30)" stroke-opacity="0.6"/><line x1="799.5" y1="532" x2="799.5" y2="707" stroke="rgb(240,30,30)" stroke-opacity="0.6"/><line x1="968.5" y1="682" x2="968.5" y2="707" stroke="rgb(240,30,30)" stroke-opacity="0.6"/><line x1="1000.5" y1="685" x2="1000.5" y2="707" stroke="rgb(240,30,30)" stroke-opacity="0.6"/><line x1="1067.5" y1="684" x2="1067.5" y2="707" stroke="rgb(240,30,30)" stroke-opacity="0.6"/><line x1="1091.5" y1="686" x2="1091.5" y2="707" stroke="rgb(240,30,30)" stroke-opacity="0.6"/><line x1="1135.5" y1="688" x2="1135.5" y2="707" stroke="rgb(240,30,30)" stroke-opacity="0.6"/><line x1="1183.5" y1="686" x2="1183.5" y2="707" stroke="rgb(240,30,30)" stroke-opacity="0.6"/><line x1="1234.5" y1="684" x2="1234.5" y2="707" stroke="rgb(240,30,30)" stroke-opacity="0.6"/></svg>
<div class="t" style="left:120.30px;top:389px;font:normal 11.00px/11px 'Liberation Sans', sans-serif;letter-spacing:-0.524px;color:#202020;">400</div>
<div class="t" style="left:253.30px;top:389px;font:normal 11.00px/11px 'Liberation Sans', sans-serif;letter-spacing:-0.524px;color:#202020;">500</div>
<div class="t" style="left:386.30px;top:389px;font:normal 11.00px/11px 'Liberation Sans', sans-serif;letter-spacing:-0.524px;color:#202020;">600</div>
<div class="t" style="left:519.30px;top:389px;font:normal 11.00px/11px 'Liberation Sans', sans-serif;letter-spacing:-0.524px;color:#202020;">700</div>
<div class="t" style="left:653.30px;top:389px;font:normal 11.00px/11px 'Liberation Sans', sans-serif;letter-spacing:-0.524px;color:#202020;">800</div>
<div class="t" style="left:786.30px;top:389px;font:normal 11.00px/11px 'Liberation Sans', sans-serif;letter-spacing:-0.524px;color:#202020;">900</div>
<div class="t" style="left:919.30px;top:389px;font:normal 11.00px/11px 'Liberation Sans', sans-serif;letter-spacing:-0.325px;color:#202020;">1000</div>
<div class="t" style="left:1052.30px;top:389px;font:normal 11.00px/11px 'Liberation Sans', sans-serif;letter-spacing:-0.050px;color:#202020;">1100</div>
<div class="t" style="left:1185.30px;top:389px;font:normal 11.00px/11px 'Liberation Sans', sans-serif;letter-spacing:-0.325px;color:#202020;">1200</div>
<div class="t" style="left:1318.30px;top:389px;font:normal 11.00px/11px 'Liberation Sans', sans-serif;letter-spacing:-0.325px;color:#202020;">1300</div>
<div style="position:absolute;left:156px;top:386px;width:27px;height:15px;background:#ffff00;border:1px solid #a83a00;"></div>
<div class="t" style="left:159.75px;top:388px;font:normal 12.00px/12px 'Liberation Sans', sans-serif;letter-spacing:-0.258px;color:#000;">436</div>
<div style="position:absolute;left:302px;top:386px;width:27px;height:15px;background:#ffff00;border:1px solid #a83a00;"></div>
<div class="t" style="left:305.75px;top:388px;font:normal 12.00px/12px 'Liberation Sans', sans-serif;letter-spacing:-0.258px;color:#000;">546</div>
<div style="position:absolute;left:152px;top:688px;width:26px;height:14px;background:#ffff00;border:1px solid #3a8a2a;"></div>
<div class="t" style="left:155.25px;top:690px;font:normal 12.00px/12px 'Liberation Sans', sans-serif;letter-spacing:-0.258px;color:#000;">433</div>
<div style="position:absolute;left:186px;top:688px;width:26px;height:14px;background:#ffff00;border:1px solid #3a8a2a;"></div>
<div class="t" style="left:189.25px;top:690px;font:normal 12.00px/12px 'Liberation Sans', sans-serif;letter-spacing:-0.258px;color:#000;">458</div>
<div style="position:absolute;left:252px;top:688px;width:26px;height:14px;background:#ffff00;border:1px solid #3a8a2a;"></div>
<div class="t" style="left:255.25px;top:690px;font:normal 12.00px/12px 'Liberation Sans', sans-serif;letter-spacing:-0.258px;color:#000;">508</div>
<div style="position:absolute;left:318px;top:688px;width:27px;height:14px;background:#ffff00;border:1px solid #3a8a2a;"></div>
<div class="t" style="left:321.75px;top:690px;font:normal 12.00px/12px 'Liberation Sans', sans-serif;letter-spacing:-0.258px;color:#000;">558</div>
<div style="position:absolute;left:503px;top:688px;width:26px;height:14px;background:#ffff00;border:1px solid #3a8a2a;"></div>
<div class="t" style="left:506.25px;top:690px;font:normal 12.00px/12px 'Liberation Sans', sans-serif;letter-spacing:-0.258px;color:#000;">696</div>
<div style="position:absolute;left:677px;top:688px;width:27px;height:14px;background:#ffff00;border:1px solid #3a8a2a;"></div>
<div class="t" style="left:680.75px;top:690px;font:normal 12.00px/12px 'Liberation Sans', sans-serif;letter-spacing:-0.258px;color:#000;">827</div>
<div style="position:absolute;left:785px;top:688px;width:27px;height:14px;background:#ffff00;border:1px solid #3a8a2a;"></div>
<div class="t" style="left:788.75px;top:690px;font:normal 12.00px/12px 'Liberation Sans', sans-serif;letter-spacing:-0.258px;color:#000;">909</div>
<div style="position:absolute;left:954px;top:663px;width:35px;height:15px;background:#ffff00;border:1px solid #3a8a2a;"></div>
<div class="t" style="left:958.50px;top:665px;font:normal 12.00px/12px 'Liberation Sans', sans-serif;letter-spacing:-0.233px;color:#000;">1036</div>
<div style="position:absolute;left:986px;top:666px;width:35px;height:15px;background:#ffff00;border:1px solid #3a8a2a;"></div>
<div class="t" style="left:990.50px;top:668px;font:normal 12.00px/12px 'Liberation Sans', sans-serif;letter-spacing:-0.233px;color:#000;">1059</div>
<div style="position:absolute;left:1053px;top:664px;width:35px;height:15px;background:#ffff00;border:1px solid #3a8a2a;"></div>
<div class="t" style="left:1057.50px;top:666px;font:normal 12.09px/12px 'Liberation Sans', sans-serif;letter-spacing:0.600px;color:#000;">1111</div>
<div style="position:absolute;left:1077px;top:667px;width:35px;height:15px;background:#ffff00;border:1px solid #3a8a2a;"></div>
<div class="t" style="left:1081.50px;top:669px;font:normal 12.00px/12px 'Liberation Sans', sans-serif;letter-spacing:0.067px;color:#000;">1128</div>
<div style="position:absolute;left:1121px;top:668px;width:35px;height:15px;background:#ffff00;border:1px solid #3a8a2a;"></div>
<div class="t" style="left:1125.50px;top:670px;font:normal 12.00px/12px 'Liberation Sans', sans-serif;letter-spacing:0.067px;color:#000;">1161</div>
<div style="position:absolute;left:1169px;top:666px;width:35px;height:15px;background:#ffff00;border:1px solid #3a8a2a;"></div>
<div class="t" style="left:1173.50px;top:668px;font:normal 12.00px/12px 'Liberation Sans', sans-serif;letter-spacing:0.067px;color:#000;">1197</div>
<div style="position:absolute;left:1220px;top:664px;width:35px;height:15px;background:#ffff00;border:1px solid #3a8a2a;"></div>
<div class="t" style="left:1224.50px;top:666px;font:normal 12.00px/12px 'Liberation Sans', sans-serif;letter-spacing:-0.233px;color:#000;">1235</div>
<div style="position:absolute;left:1355px;top:385px;width:12px;height:324px;background:#f2f0dc;border-top:2px solid #707070;border-left:2px solid #707070;"></div>
<div style="position:absolute;left:8px;top:710px;width:1348px;height:26px;background:#fffce8;"></div>
<div class="t" style="left:18.00px;top:719px;font:normal 12.00px/12px 'Liberation Sans', sans-serif;letter-spacing:0.184px;color:#101010;">Max: 695 nm</div>
<div style="position:absolute;left:922px;top:716px;width:71px;height:15px;border-radius:4px;background:linear-gradient(#f6f6e6,#e8e8d8 40%,#c8c8b8 75%,#a8a898);box-shadow:0 1px 0 #e0dccc;"></div>
<div class="t" style="left:932.50px;top:718px;font:normal 11.00px/11px 'Liberation Sans', sans-serif;letter-spacing:-0.182px;color:#141414;">Reference</div>
<div style="position:absolute;left:999px;top:716px;width:45px;height:15px;border-radius:4px;background:linear-gradient(#f6f6e6,#e8e8d8 40%,#c8c8b8 75%,#a8a898);box-shadow:0 1px 0 #e0dccc;"></div>
<div class="t" style="left:1010.00px;top:718px;font:normal 11.00px/11px 'Liberation Sans', sans-serif;letter-spacing:0.496px;color:#141414;">Dips</div>
<div style="position:absolute;left:1050px;top:716px;width:49px;height:15px;border-radius:4px;background:linear-gradient(#ffe26a,#fff27a 35%,#ffdf40 70%,#ffc21a);border:1px solid #f5a81c;box-shadow:inset 0 0 2px #ffb000;"></div>
<div class="t" style="left:1060.50px;top:718px;font:bold 10.86px/11px 'Liberation Sans', sans-serif;letter-spacing:-0.600px;color:#6e6a50;">Peaks</div>
<div style="position:absolute;left:1106px;top:716px;width:54px;height:15px;border-radius:4px;background:linear-gradient(#ffe26a,#fff27a 35%,#ffdf40 70%,#ffc21a);border:1px solid #f5a81c;box-shadow:inset 0 0 2px #ffb000;"></div>
<div class="t" style="left:1117.00px;top:718px;font:bold 11.00px/11px 'Liberation Sans', sans-serif;letter-spacing:-0.367px;color:#6e6a50;">Colors</div>
<div class="t" style="left:1192.50px;top:718px;font:normal 11.75px/12px 'Liberation Sans', sans-serif;letter-spacing:-0.600px;color:#101010;">Filter</div>
<div style="position:absolute;left:1223px;top:714px;width:34px;height:15px;background:#fffcf2;"></div>
<div class="t" style="left:1233.50px;top:718px;font:normal 12.00px/12px 'Liberation Sans', sans-serif;letter-spacing:-0.144px;color:#101010;">30</div>
<div style="position:absolute;left:1276px;top:716px;width:74px;height:15px;border-radius:4px;background:linear-gradient(#ffe26a,#fff27a 35%,#ffdf40 70%,#ffc21a);border:1px solid #f5a81c;box-shadow:inset 0 0 2px #ffb000;"></div>
<div class="t" style="left:1289.00px;top:718px;font:bold 11.00px/11px 'Liberation Sans', sans-serif;letter-spacing:-0.535px;color:#6e6a50;">Trim scale</div>
</body></html>
